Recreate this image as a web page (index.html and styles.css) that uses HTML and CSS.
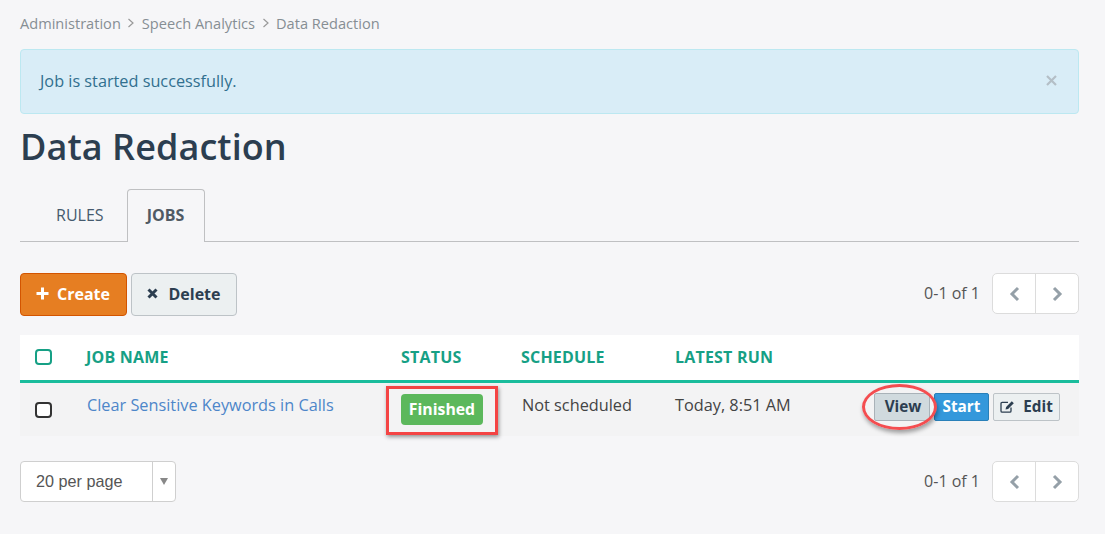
FILE: index.html
```html
<!DOCTYPE html>
<html lang="en">
<head>
    <meta charset="UTF-8">
    <title>Data Redaction</title>
    <link rel="stylesheet" href="styles.css">
</head>
<body>
    <div class="breadcrumb">
        <span>Administration</span>
        <svg class="crumb-sep" width="8" height="10" viewBox="0 0 8 10"><path d="M1.5 1l4.5 4-4.5 4" fill="none" stroke="#999" stroke-width="1.2"/></svg>
        <span>Speech Analytics</span>
        <svg class="crumb-sep" width="8" height="10" viewBox="0 0 8 10"><path d="M1.5 1l4.5 4-4.5 4" fill="none" stroke="#999" stroke-width="1.2"/></svg>
        <span>Data Redaction</span>
    </div>

    <div class="alert">
        <span>Job is started successfully.</span>
        <svg class="alert-close" width="11" height="11" viewBox="0 0 11 11"><path d="M1 1l9 9M10 1l-9 9" stroke="#b4bfc6" stroke-width="2.2"/></svg>
    </div>

    <h1>Data Redaction</h1>

    <div class="tabs">
        <div class="tab">RULES</div>
        <div class="tab active">JOBS</div>
    </div>

    <div class="toolbar">
        <div class="actions">
            <button class="btn btn-create">
                <svg width="13" height="13" viewBox="0 0 13 13"><path d="M6.500 .5v12M.5 6.500h12" stroke="#fff" stroke-width="3"/></svg>
                Create
            </button>
            <button class="btn btn-delete">
                <svg width="11" height="11" viewBox="0 0 11 11"><path d="M1.5 1.5l8 8M9.500 1.500l-8 8" stroke="#2c3e50" stroke-width="3"/></svg>
                Delete
            </button>
        </div>
        <div class="pager">
            <span class="pager-text">0-1 of 1</span>
            <div class="pager-btns">
                <div class="pager-btn"><svg width="11" height="16" viewBox="0 0 11 16"><path d="M9 2L3 8l6 6" fill="none" stroke="#95a0a8" stroke-width="3"/></svg></div>
                <div class="pager-btn"><svg width="11" height="16" viewBox="0 0 11 16"><path d="M2 2l6 6-6 6" fill="none" stroke="#95a0a8" stroke-width="3"/></svg></div>
            </div>
        </div>
    </div>

    <table class="jobs">
        <thead>
            <tr>
                <th class="col-check"><span class="check check-head"></span></th>
                <th class="col-name">JOB NAME</th>
                <th class="col-status">STATUS</th>
                <th class="col-schedule">SCHEDULE</th>
                <th class="col-run">LATEST RUN</th>
                <th></th>
            </tr>
        </thead>
        <tbody>
            <tr>
                <td class="col-check"><span class="check"></span></td>
                <td class="text-cell indent"><a href="#">Clear Sensitive Keywords in Calls</a></td>
                <td class="status-cell">
                    <span class="badge">Finished</span>
                    <span class="mark-box"></span>
                </td>
                <td class="text-cell indent">Not scheduled</td>
                <td class="text-cell">Today, 8:51 AM</td>
                <td>
                    <div class="row-actions">
                        <span class="view-wrap">
                            <button class="mini mini-view">View</button>
                            <span class="mark-ellipse"></span>
                        </span>
                        <button class="mini mini-start">Start</button>
                        <button class="mini mini-edit">
                            <svg width="15" height="13" viewBox="0 0 15 13"><path d="M11 7.500V11a1.200 1.200 0 0 1-1.200 1.200H2.200A1.200 1.200 0 0 1 1 11V3.500a1.200 1.200 0 0 1 1.200-1.200H8" fill="none" stroke="#2c3e50" stroke-width="1.300"/><path d="M5.500 9.500l.6-2.600L11.800 1.200l2 2-5.700 5.700z" fill="#2c3e50"/></svg>
                            Edit
                        </button>
                    </div>
                </td>
            </tr>
        </tbody>
    </table>

    <div class="footer-bar">
        <div class="per-page">
            <span class="per-page-text">20 per page</span>
            <span class="per-page-arrow"></span>
        </div>
        <div class="pager">
            <span class="pager-text">0-1 of 1</span>
            <div class="pager-btns">
                <div class="pager-btn"><svg width="11" height="16" viewBox="0 0 11 16"><path d="M9 2L3 8l6 6" fill="none" stroke="#95a0a8" stroke-width="3"/></svg></div>
                <div class="pager-btn"><svg width="11" height="16" viewBox="0 0 11 16"><path d="M2 2l6 6-6 6" fill="none" stroke="#95a0a8" stroke-width="3"/></svg></div>
            </div>
        </div>
    </div>
</body>
</html>
```

FILE: styles.css
```css
* {
    box-sizing: border-box;
}
html, body {
    height: 534px;
    overflow: hidden;
}
body {
    margin: 0;
    padding: 0 26px 0 20px;
    background-color: #f6f6f8;
    font-family: "Open Sans", "Liberation Sans", sans-serif;
    font-size: 16px;
    color: #2c3e50;
}
.breadcrumb {
    height: 49px;
    padding-bottom: 3px;
    display: flex;
    align-items: center;
    font-size: 14.600px;
    color: #868e94;
}
.crumb-sep {
    margin: 0 6.500px;
}
.alert {
    height: 65px;
    padding: 0 21px 2px 19px;
    display: flex;
    align-items: center;
    justify-content: space-between;
    background-color: #d9edf7;
    border: 1px solid #bce8f1;
    border-radius: 4px;
    font-size: 16.250px;
    color: #31708f;
}
h1 {
    margin: 0;
    height: 75px;
    padding-top: 9px;
    font-size: 36px;
    line-height: 47px;
    font-weight: 600;
    letter-spacing: 0.070px;
    color: #2c3e50;
}
.tabs {
    height: 53px;
    padding-left: 17px;
    display: flex;
    gap: 4px;
    border-bottom: 1px solid #bfc0c2;
}
.tab {
    height: 53px;
    padding: 0 18px;
    line-height: 51px;
    font-size: 16px;
    color: #465a6e;
    border: 1px solid transparent;
    border-bottom: none;
}
.tab.active {
    width: 78px;
    padding: 0;
    text-align: center;
    font-weight: 700;
    color: #505a64;
    background-color: #f6f6f8;
    border-color: #bfc0c2;
    border-radius: 4px 4px 0 0;
}
.toolbar {
    margin-top: 31px;
    height: 43px;
    display: flex;
    justify-content: space-between;
    align-items: flex-start;
}
.actions {
    display: flex;
    gap: 4px;
}
.btn {
    height: 43px;
    padding: 0 0 2px;
    display: flex;
    align-items: center;
    justify-content: center;
    gap: 8px;
    font-family: inherit;
    font-size: 16px;
    font-weight: 700;
    border-radius: 4px;
}
.btn-create {
    width: 107px;
    padding-right: 1px;
    color: #fff;
    background-color: #e67e22;
    border: 1px solid #d35400;
}
.btn-delete {
    width: 106px;
    color: #2c3e50;
    background-color: #ecf0f1;
    border: 1px solid #bdc3c7;
    gap: 10px;
}
.pager {
    display: flex;
    align-items: center;
    gap: 12px;
}
.pager-text {
    padding-bottom: 2px;
    font-size: 16px;
    color: #555;
}
.pager-btns {
    width: 87px;
    height: 41px;
    display: flex;
    background-color: #fff;
    border: 1px solid #dcdcdc;
    border-radius: 5px;
}
.pager-btn {
    flex: 1;
    display: flex;
    align-items: center;
    justify-content: center;
}
.pager-btn + .pager-btn {
    border-left: 1px solid #dcdcdc;
}
.jobs {
    width: 100%;
    margin-top: 19px;
    border-collapse: separate;
    border-spacing: 0;
    table-layout: fixed;
}
.jobs th {
    height: 48px;
    padding: 0 0 2px;
    background-color: #fff;
    border-bottom: 3px solid #1abc9c;
    color: #16a085;
    font-size: 16px;
    font-weight: 700;
    text-align: left;
    letter-spacing: 0.200px;
}
.jobs td {
    height: 53px;
    padding: 0;
    background-color: #f3f3f4;
    font-size: 16.300px;
    color: #444;
}
.jobs .col-check {
    width: 66px;
    padding-left: 15px;
}
.col-name {
    width: 315px;
}
.col-status {
    width: 120px;
}
.col-schedule {
    width: 154px;
}
.col-run {
    width: 170px;
}
.check {
    display: block;
    width: 17px;
    height: 16px;
    border: 2px solid #333;
    border-radius: 4px;
    background-color: #fff;
}
.check-head {
    border-color: #16a085;
}
.jobs .text-cell {
    padding-bottom: 10px;
}
.jobs .indent {
    padding-left: 1px;
}
.text-cell a {
    color: #4d86c9;
    text-decoration: none;
}
.status-cell {
    position: relative;
}
.badge {
    display: block;
    width: 82px;
    height: 31px;
    line-height: 30px;
    text-align: center;
    color: #fff;
    font-weight: 700;
    font-size: 15.800px;
    background-color: #5cb85c;
    border-radius: 4px;
}
.mark-box {
    position: absolute;
    left: -15px;
    top: 3px;
    width: 112px;
    height: 49px;
    border: 3px solid #f44444;
    box-shadow: 1px 2px 4px rgba(0, 0, 0, 0.400);
}
.row-actions {
    padding: 0 19px 6px 0;
    display: flex;
    justify-content: flex-end;
    align-items: center;
    gap: 4px;
}
.view-wrap {
    position: relative;
    display: block;
}
.mini {
    height: 28px;
    padding: 0 0 1px;
    display: flex;
    align-items: center;
    justify-content: center;
    font-family: inherit;
    font-size: 15.300px;
    font-weight: 700;
    border-radius: 2px;
}
.mini-view {
    width: 56px;
    padding-left: 2px;
    color: #2c3e50;
    background-color: #d0dade;
    border: 1px solid #a9b2b8;
}
.mini-start {
    width: 55px;
    color: #fff;
    background-color: #3498db;
    border: 1px solid #2980b9;
}
.mini-edit {
    width: 67px;
    gap: 8px;
    color: #2c3e50;
    background-color: #ecf0f1;
    border: 1px solid #bdc3c7;
}
.mark-ellipse {
    position: absolute;
    left: -12px;
    top: -9px;
    width: 75px;
    height: 46px;
    border: 3px solid #f44d50;
    border-radius: 50%;
    box-shadow: 1px 3px 4px rgba(0, 0, 0, 0.350);
}
.footer-bar {
    margin-top: 25px;
    display: flex;
    justify-content: space-between;
    align-items: center;
}
.per-page {
    width: 156px;
    height: 41px;
    display: flex;
    background-color: #fff;
    border: 1px solid #cfcfcf;
    border-radius: 4px;
}
.per-page-text {
    flex: 1;
    padding-left: 15px;
    line-height: 39px;
    font-family: "Liberation Sans", sans-serif;
    font-size: 16.200px;
    color: #555;
    border-right: 1px solid #cfcfcf;
}
.per-page-arrow {
    width: 22px;
    display: flex;
    align-items: center;
    justify-content: center;
}
.per-page-arrow::after {
    content: "";
    border-top: 7px solid #888;
    border-left: 4px solid transparent;
    border-right: 4px solid transparent;
}
```
